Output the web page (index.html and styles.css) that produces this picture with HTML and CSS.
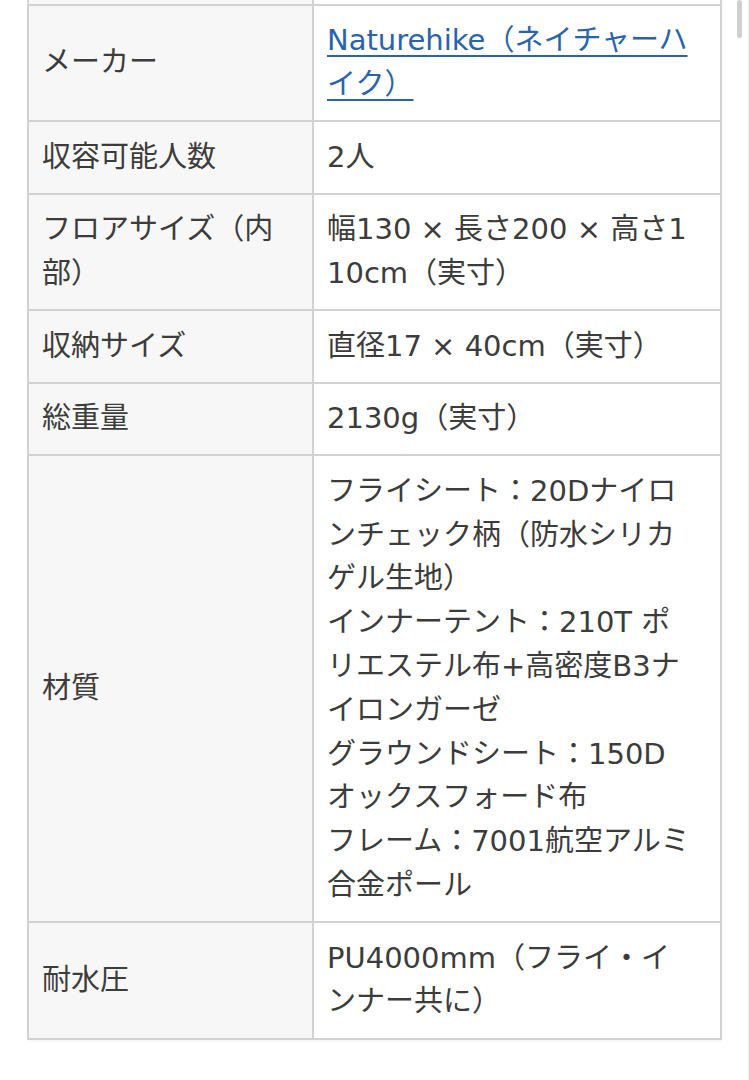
FILE: index.html
```html
<!DOCTYPE html>
<html lang="ja">
<head>
<meta charset="utf-8">
<title>スペック</title>
<link rel="stylesheet" href="styles.css">
</head>
<body>
<div class="page">
  <table class="spec">
    <tbody>
      <tr class="stub"><th></th><td></td></tr>
      <tr><th>メーカー</th><td><a href="#">Naturehike（ネイチャーハイク）</a></td></tr>
      <tr><th>収容可能人数</th><td>2人</td></tr>
      <tr><th>フロアサイズ（内部）</th><td>幅130 × 長さ200 × 高さ110cm（実寸）</td></tr>
      <tr><th>収納サイズ</th><td>直径17 × 40cm（実寸）</td></tr>
      <tr><th>総重量</th><td>2130g（実寸）</td></tr>
      <tr><th>材質</th><td>フライシート：20Dナイロンチェック柄（防水シリカゲル生地）<br>インナーテント：210T ポリエステル布+高密度B3ナイロンガーゼ<br>グラウンドシート：150Dオックスフォード布<br>フレーム：7001航空アルミ合金ポール</td></tr>
      <tr><th>耐水圧</th><td>PU4000mm（フライ・インナー共に）</td></tr>
    </tbody>
  </table>
  <div class="scroll-indicator"></div>
</div>
</body>
</html>
```
FILE: styles.css
```css
html, body {
  margin: 0;
  padding: 0;
  background: #ffffff;
}

.page {
  position: relative;
  min-height: 1080px;
  border-right: 1px solid #ededed;
  box-sizing: border-box;
  padding: 0 27px;
}

.spec {
  width: 695px;
  border-collapse: collapse;
  table-layout: fixed;
  font-family: "DejaVu Sans", "Noto Sans CJK JP", sans-serif;
  font-size: 29px;
  line-height: 43.8px;
  color: #3c3c3c;
  word-break: break-all;
  box-shadow: 0 2px 2px rgba(0, 0, 0, 0.04);
}

.spec th,
.spec td {
  border: 2px solid #d2d2d2;
  padding: 13.4px 26px 13.4px 13px;
  vertical-align: middle;
  text-align: left;
  font-weight: normal;
}

.spec th {
  width: 283px;
  background: #f7f7f7;
}

.spec td {
  background: #ffffff;
}

.spec .stub th,
.spec .stub td {
  border-top: none;
  padding: 0;
  height: 4px;
  line-height: 0;
}

.spec a {
  color: #2a63ad;
  text-decoration: underline;
  text-underline-offset: 5px;
  text-decoration-thickness: 2px;
}

.scroll-indicator {
  position: absolute;
  top: 0;
  right: 6px;
  width: 5px;
  height: 38px;
  border-radius: 3px;
  background: #cfcfcf;
}
```
